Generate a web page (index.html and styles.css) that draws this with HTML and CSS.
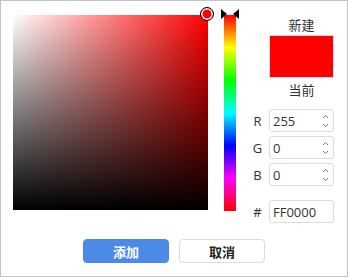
FILE: index.html
```html
<!DOCTYPE html>
<html lang="zh">
<head>
<meta charset="utf-8">
<title>颜色选择</title>
<link rel="stylesheet" href="styles.css">
</head>
<body>
<div class="panel">
  <div class="main">
    <div class="sv">
      <span class="sv-cursor"></span>
    </div>
    <div class="hue">
      <span class="tri tri-left"></span>
      <span class="tri tri-right"></span>
    </div>
    <div class="side">
      <div class="title">新建</div>
      <div class="swatch"></div>
      <div class="title sub">当前</div>
      <div class="field first"><span class="lbl">R</span><div class="box"><span class="val">255</span><svg class="spin" width="7" height="16" viewBox="0 0 7 16"><path d="M1 5 L3.5 2.5 L6 5" fill="none" stroke="#777" stroke-width="1"/><path d="M1 11 L3.5 13.5 L6 11" fill="none" stroke="#777" stroke-width="1"/></svg></div></div>
      <div class="field"><span class="lbl">G</span><div class="box"><span class="val">0</span><svg class="spin" width="7" height="16" viewBox="0 0 7 16"><path d="M1 5 L3.5 2.5 L6 5" fill="none" stroke="#777" stroke-width="1"/><path d="M1 11 L3.5 13.5 L6 11" fill="none" stroke="#777" stroke-width="1"/></svg></div></div>
      <div class="field"><span class="lbl">B</span><div class="box"><span class="val">0</span><svg class="spin" width="7" height="16" viewBox="0 0 7 16"><path d="M1 5 L3.5 2.5 L6 5" fill="none" stroke="#777" stroke-width="1"/><path d="M1 11 L3.5 13.5 L6 11" fill="none" stroke="#777" stroke-width="1"/></svg></div></div>
      <div class="field hex"><span class="lbl">#</span><div class="box"><span class="val">FF0000</span></div></div>
    </div>
  </div>
  <div class="actions">
    <button class="btn primary">添加</button>
    <button class="btn">取消</button>
  </div>
</div>
</body>
</html>
```
FILE: styles.css
```css
* { box-sizing: border-box; }
html, body { margin: 0; padding: 0; background: #fff; }
body {
  font-family: "Open Sans", "Noto Sans CJK SC", sans-serif;
  font-size: 13px;
  color: #333;
}
.panel {
  width: 348px;
  height: 277px;
  border: 1px solid #c3c3c3;
  padding: 14px 0 0 12px;
  display: flex;
  flex-direction: column;
}
.main {
  display: flex;
  align-items: flex-start;
}
.sv {
  position: relative;
  width: 195px;
  height: 195px;
  flex: none;
  background:
    linear-gradient(to top, #000, rgba(0,0,0,0)),
    linear-gradient(to right, #fff, #f00);
}
.sv-cursor {
  position: absolute;
  left: 187px;
  top: -8px;
  width: 14px;
  height: 14px;
  border-radius: 50%;
  background: #f00;
  border: 1px solid #000;
  box-shadow: inset 0 0 0 1.5px #fff;
}
.hue {
  position: relative;
  margin-left: 16px;
  width: 12px;
  height: 196px;
  flex: none;
  background: linear-gradient(to bottom, #f00 0%, #ff0 16.7%, #0f0 33.3%, #0ff 50%, #00f 66.7%, #f0f 83.3%, #f00 100%);
}
.tri {
  position: absolute;
  top: -6px;
  width: 0;
  height: 0;
  border-top: 5px solid transparent;
  border-bottom: 5px solid transparent;
}
.tri-left {
  left: -3px;
  border-left: 6px solid #000;
}
.tri-right {
  right: -3px;
  border-right: 6px solid #000;
}
.side {
  margin-left: 14px;
  width: 85px;
  display: grid;
  grid-template-columns: 15px 65px;
  column-gap: 4px;
  align-content: start;
}
.title {
  grid-column: 2;
  text-align: center;
  line-height: 18px;
  margin-top: 1px;
}
.swatch {
  grid-column: 2;
  height: 43px;
  margin-top: 1px;
  border: 1px solid #dcdcdc;
  background: #f00;
  background-clip: padding-box;
}
.title.sub {
  margin-top: 3px;
}
.field {
  grid-column: 1 / 3;
  display: grid;
  grid-template-columns: 15px 65px;
  column-gap: 4px;
  align-items: center;
  margin-top: 4px;
}
.field.first { margin-top: 10px; }
.field.hex { margin-top: 14px; }
.lbl {
  text-align: center;
  color: #333;
}
.box {
  height: 23px;
  border: 1px solid #dcdcdc;
  border-radius: 3px;
  display: flex;
  align-items: center;
  justify-content: space-between;
  padding: 0 4px 0 3px;
}
.val { line-height: 18px; }
.spin { display: block; }
.actions {
  display: flex;
  justify-content: center;
  gap: 10px;
  margin-top: 16px;
  margin-left: -12px;
}
.btn {
  width: 86px;
  height: 24px;
  border: 1px solid #dcdcdc;
  border-radius: 4px;
  background: #fff;
  color: #222;
  font-family: "Noto Sans CJK SC", sans-serif;
  font-size: 13px;
  font-weight: bold;
  padding: 0;
}
.btn.primary {
  background: #4b8ae6;
  border-color: #4b8ae6;
  color: #fff;
}
```
